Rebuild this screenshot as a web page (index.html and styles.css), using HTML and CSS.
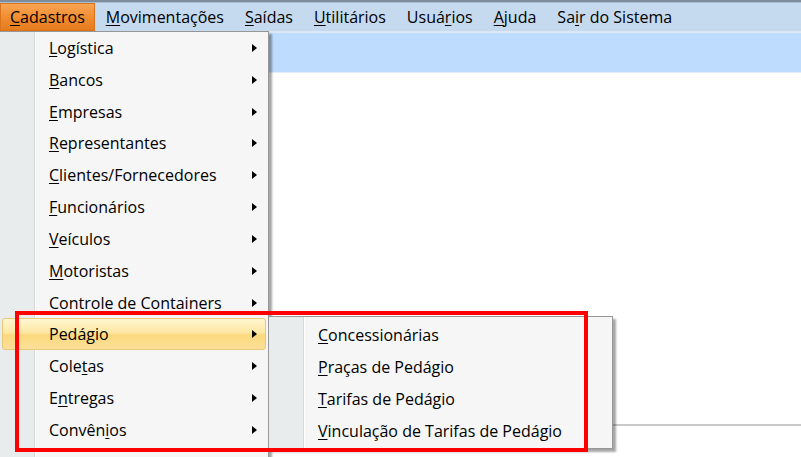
FILE: index.html
```html
<!DOCTYPE html>
<html lang="pt-BR">
<head>
<meta charset="utf-8">
<title>Cadastros</title>
<link rel="stylesheet" href="styles.css">
</head>
<body>
<div class="window">
  <div class="topline"></div>
  <nav class="menubar">
    <span class="mb-item active"><u>C</u>adastros</span>
    <span class="mb-item"><u>M</u>ovimentações</span>
    <span class="mb-item"><u>S</u>aídas</span>
    <span class="mb-item"><u>U</u>tilitários</span>
    <span class="mb-item">Usuá<u>r</u>ios</span>
    <span class="mb-item"><u>A</u>juda</span>
    <span class="mb-item">Sa<u>i</u>r do Sistema</span>
  </nav>
  <div class="band"></div>
  <div class="content">
    <div class="panel-line"></div>
  </div>

  <div class="menu main-menu">
    <div class="item"><u>L</u>ogística<i class="arrow"></i></div>
    <div class="item"><u>B</u>ancos<i class="arrow"></i></div>
    <div class="item"><u>E</u>mpresas<i class="arrow"></i></div>
    <div class="item"><u>R</u>epresentantes<i class="arrow"></i></div>
    <div class="item"><u>C</u>lientes/Fornecedores<i class="arrow"></i></div>
    <div class="item"><u>F</u>uncionários<i class="arrow"></i></div>
    <div class="item"><u>V</u>eículos<i class="arrow"></i></div>
    <div class="item"><u>M</u>otoristas<i class="arrow"></i></div>
    <div class="item">Controle de Containers<i class="arrow"></i></div>
    <div class="item hot">Pedá<u>g</u>io<i class="arrow"></i></div>
    <div class="item">Cole<u>t</u>as<i class="arrow"></i></div>
    <div class="item">E<u>n</u>tregas<i class="arrow"></i></div>
    <div class="item">Convên<u>i</u>os<i class="arrow"></i></div>
    <div class="item peek"><span class="peek-text">Cadastros Gerais</span><i class="arrow"></i></div>
  </div>

  <div class="menu sub-menu">
    <div class="item"><u>C</u>oncessionárias</div>
    <div class="item"><u>P</u>raças de Pedágio</div>
    <div class="item"><u>T</u>arifas de Pedágio</div>
    <div class="item"><u>V</u>inculação de Tarifas de Pedágio</div>
  </div>

  <div class="callout"></div>
</div>
</body>
</html>
```
FILE: styles.css
```css
html, body {
  margin: 0;
  padding: 0;
}
body {
  width: 801px;
  height: 457px;
  overflow: hidden;
  background: #ffffff;
  font-family: "Open Sans", "Noto Sans", sans-serif;
  font-size: 16px;
  color: #000;
}
.window {
  position: relative;
  width: 801px;
  height: 457px;
  overflow: hidden;
}
.topline {
  height: 2px;
  background: #7f8c9b;
  border-bottom: 1px solid #a9bdd2;
}
.menubar {
  display: flex;
  height: 28px;
  align-items: stretch;
  background: #c5daef;
}
.mb-item {
  display: flex;
  align-items: center;
  padding: 0 11px 0 10px;
  white-space: nowrap;
}
.mb-item.active {
  background: linear-gradient(#f9a656, #ee8a2c 60%, #e57a1c);
  box-shadow: inset 0 0 0 1px #d9741c;
  padding-right: 10px;
  margin-right: 1px;
}
u {
  text-decoration: underline;
  text-underline-offset: 2px;
}
.band {
  height: 39px;
  background: #bedcfd;
  border-top: 2px solid #dce8f5;
  border-bottom: 1px solid #e3eefb;
}
.content {
  height: 384px;
}
.panel-line {
  height: 351px;
  border-bottom: 2px solid #c9c9c9;
}

.menu {
  position: absolute;
  box-sizing: border-box;
  border: 1px solid #979797;
  background:
    linear-gradient(to right, #e8ecec 0, #e8ecec 34px, #d7d9d9 34px, #d7d9d9 35px, #ffffff 35px, #ffffff 36px, #f6f6f6 36px);
  box-shadow: 3px 3px 2px rgba(0, 0, 0, 0.35);
}
.main-menu {
  left: -1px;
  top: 31px;
  width: 270px;
  height: 460px;
}
.sub-menu {
  left: 268px;
  top: 316px;
  width: 345px;
  height: 133px;
  padding-top: 2px;
}
.item {
  position: relative;
  height: 31.83px;
  line-height: 30px;
  box-sizing: border-box;
  white-space: nowrap;
  margin: 0 2px;
  border: 1px solid transparent;
  border-radius: 3px;
}
.main-menu .item {
  padding-left: 46px;
}
.sub-menu .item {
  padding-left: 46px;
  height: 31.9px;
}
.item.hot {
  background: linear-gradient(#fff6d2, #fde7a2 45%, #fbd97d 55%, #fbe09a);
  border-color: #e8c977;
}
.peek-text {
  display: inline-block;
  padding-top: 1px;
}
.arrow {
  position: absolute;
  right: 8px;
  top: 11px;
  width: 0;
  height: 0;
  border-left: 5px solid #000;
  border-top: 4px solid transparent;
  border-bottom: 4px solid transparent;
}
.callout {
  position: absolute;
  left: 15px;
  top: 311px;
  width: 573px;
  height: 141px;
  box-sizing: border-box;
  border: 4px solid #ff0000;
}
```
